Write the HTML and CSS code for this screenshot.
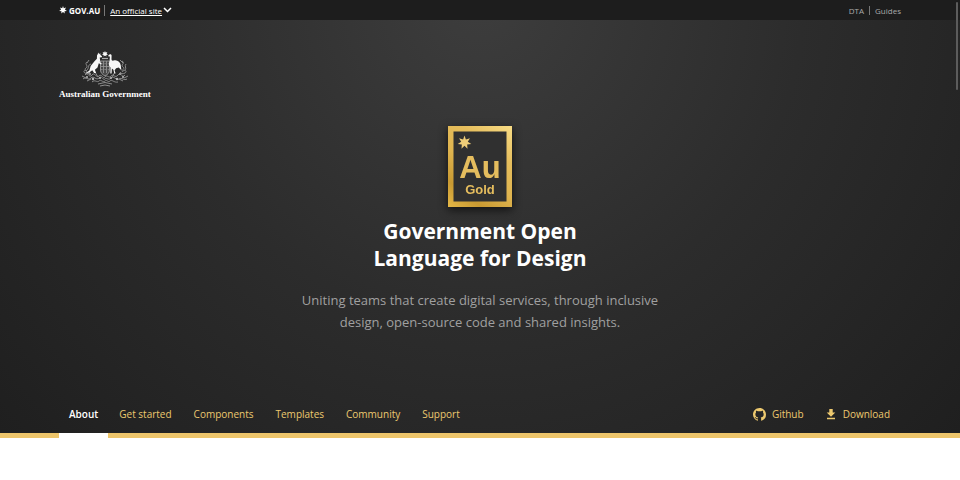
FILE: index.html
```html
<!DOCTYPE html>
<html lang="en-AU">
<head>
<meta charset="utf-8">
<meta name="viewport" content="width=device-width, initial-scale=1">
<title>Government Open Language for Design</title>
<link rel="stylesheet" href="styles.css">
</head>
<body>
<div class="masthead">
  <div class="topbar">
    <div class="topbar-left">
      <a class="gov" href="#"><svg class="star" viewBox="-10 -10 20 20" aria-hidden="true"><path d="M0-10 2-4.200 7.800-6.200 4.700-1 9.700 2.200 3.800 3 4.300 9 0 4.800-4.300 9-3.800 3-9.700 2.200-4.700-1-7.800-6.200-2-4.200Z"/></svg>GOV.AU</a>
      <button class="official" type="button"><span>An official site</span><svg viewBox="0 0 9 6" aria-hidden="true"><path d="M1 1l3.500 3.500L8 1"/></svg></button>
    </div>
    <div class="topbar-right"><a href="#">DTA</a><a href="#">Guides</a></div>
  </div>
  <header class="hero">
    <a class="crest" href="#">
      <svg viewBox="0 0 50 37" aria-hidden="true">
        <g stroke="#8c8c8c" stroke-width="1" fill="none">
          <path d="M5 24c3-4 4 4 7 0s4 4 7 1 4 4 6 1 4 2 6-1 4 3 7-1 4 4 7 0M3 28c3-3 5 2 8-1s5 3 8 0 4 3 6 1 3 2 6-1 5 3 8 1 5 2 8 0"/>
          <path d="M7 20c-3-2-4 1-2 2s4 1 5-1M43 20c3-2 4 1 2 2s-4 1-5-1M2 25l4 2M48 25l-4 2M15 21l3 5M35 21l-3 5"/>
          <path d="M7 11c-3 2 2 4-1 6s3 3 0 5M11 13c-4 1-1 4-5 7M42 10c4 2-2 4 1 6s-3 3 0 5M46 13c-2 2 1 4-1 6M40 9l3 3M9 9l-2 3"/>
          <path d="M12 31c3-3 5 1 7-1s4 2 6 0 3 2 5 0 4 2 8 1M18 33q7-3 14 0M20 35q5-2 10 0M7 30l4-2M43 30l-4-2"/>
        </g>
        <path d="M20.500 10h9v9c0 3-2 4.500-4.500 6-2.500-1.500-4.500-3-4.500-6z" fill="#4a4a4a" stroke="#aaa" stroke-width=".8"/>
        <path d="M21 15.500h8M23.500 10v12M26.500 10v12M21.200 12.700h1.300m2 0h1.300m2 0h1M21.200 18.500h1.300m2 0h1.300m2 0h1" stroke="#999" stroke-width=".8" fill="none"/>
        <path d="M22 7.500h6" stroke="#aaa" stroke-width="1.200"/>
        <g fill="#f8f8f8">
          <path d="M25 0l.7 1.600 1.700-.5-.8 1.500 1.400.9-1.700.4.1 1.700L25 4.400l-1.400 1.200.1-1.700-1.700-.4 1.400-.9-.8-1.500 1.700.5z"/>
          <path d="M18.200 1.500l1 1.700 1-1.200.2 2 1.700 1.300-.4.900-2 .3.500 3.500-.5 1 1.900 1.500-.5.900-2.300-1.200-1.300 4.300-2.600 2.200 1.200 3.300h-2l-1.800-2.800-3.100 2.400-3.700.9 3.900-3.100 1.300-4.500 3.600-4.500 2.600-2.700.1-3.200.7-1.200z"/>
          <path d="M28 5l1-1.300c.9-.9 2.500-.6 2.600.9l-.1 3.400c0 1.500.8 1.900 2.300 1.500 3.700-.8 6.400 1.500 7 4.900l.6 4.800-2.700-2.700-2.600.8-1.500 2 .9 3.300h-1.200l-.9-3.800-1.500-1.300-.3 5.100h-1.300l.2-6c-1.700-1.500-2-3.900-1-6.100l.4-5-1 .1z"/>
        </g>
        <g fill="#b8b8b8"><circle cx="7" cy="26" r="1"/><circle cx="13" cy="28" r="1.200"/><circle cx="20" cy="27" r="1"/><circle cx="31" cy="27" r="1"/><circle cx="37" cy="28" r="1.200"/><circle cx="43" cy="26" r="1"/><circle cx="10" cy="23" r=".9"/><circle cx="40" cy="23" r=".9"/></g>
      </svg>
      <span>Australian Government</span>
    </a>
    <div class="intro">
      <svg class="logo" viewBox="0 0 64 81" role="img" aria-label="Au Gold">
        <defs><linearGradient id="gold" gradientUnits="userSpaceOnUse" x1="64" y1="0" x2="0" y2="81"><stop offset="0" stop-color="#f8dc86"/><stop offset=".3" stop-color="#e5bd5c"/><stop offset=".55" stop-color="#dfb44f"/><stop offset=".8" stop-color="#c99a32"/><stop offset="1" stop-color="#e5b847"/></linearGradient></defs>
        <path d="M0 0h64v81H0z" fill="url(#gold)"/>
        <path d="M5.500 5.500h53v70h-53z" fill="#303030"/>
        <path transform="translate(16.500 16.500) scale(.7)" fill="#efcd78" d="M0-10 2-4.200 7.800-6.200 4.700-1 9.700 2.200 3.800 3 4.300 9 0 4.800-4.300 9-3.800 3-9.700 2.200-4.700-1-7.800-6.200-2-4.200Z"/>
        <text class="logo-symbol" x="32" y="52" text-anchor="middle">Au</text>
        <text class="logo-name" x="32" y="68" text-anchor="middle">Gold</text>
      </svg>
      <h1>Government Open<br>Language for Design</h1>
      <p>Uniting teams that create digital services, through inclusive design, open-source code and shared insights.</p>
    </div>
    <nav class="nav" aria-label="Main">
      <div class="links">
        <a class="current" href="#" aria-current="page">About</a>
        <a href="#">Get started</a>
        <a href="#">Components</a>
        <a href="#">Templates</a>
        <a href="#">Community</a>
        <a href="#">Support</a>
      </div>
      <div class="links">
        <a href="#"><svg viewBox="0 0 16 16" aria-hidden="true"><path d="M8 0C3.580 0 0 3.580 0 8c0 3.540 2.290 6.530 5.470 7.590.4.070.55-.17.55-.38 0-.19-.01-.82-.01-1.490-2.010.37-2.530-.49-2.690-.94-.09-.23-.48-.94-.82-1.130-.28-.15-.68-.52-.01-.53.63-.01 1.080.58 1.230.82.72 1.210 1.870.87 2.330.66.07-.52.28-.87.51-1.070-1.780-.2-3.640-.89-3.640-3.950 0-.87.31-1.590.82-2.150-.08-.2-.36-1.020.08-2.120 0 0 .67-.21 2.200.82.64-.18 1.320-.27 2-.27s1.360.09 2 .27c1.530-1.040 2.200-.82 2.200-.82.44 1.100.16 1.920.08 2.120.51.56.82 1.270.82 2.150 0 3.070-1.870 3.750-3.650 3.950.29.25.54.73.54 1.480 0 1.070-.01 1.930-.01 2.200 0 .21.15.46.55.38A8.010 8.010 0 0 0 16 8c0-4.420-3.580-8-8-8z"/></svg>Github</a>
        <a class="download" href="#"><svg viewBox="0 0 10 12" aria-hidden="true"><path d="M3.300 1h3.400v3.500H9.300L5 8.800.7 4.500h2.600zM1 9.700h8v1.600H1z"/></svg>Download</a>
      </div>
    </nav>
  </header>
  <div class="scrollbar" aria-hidden="true"></div>
</div>
</body>
</html>
```
FILE: styles.css
```css
* { box-sizing: border-box; }
body {
  margin: 0;
  background: #fff;
  font-family: "Open Sans", "Noto Sans", sans-serif;
  font-size: 10px;
}
a { color: inherit; text-decoration: none; }

.masthead {
  position: relative;
  border-bottom: 5px solid #edc56b;
  background: radial-gradient(circle at 50% 0, #3d3d3d, #2c2c2c 50%, #1f1f1f 100%);
  box-shadow: 0 1px 2px #999;
}
.topbar {
  display: flex;
  justify-content: space-between;
  align-items: center;
  height: 20px;
  padding: 0 59px;
  background: #1d1d1d;
  font-size: 8px;
}
.topbar-left, .topbar-right { display: flex; align-items: center; }
.gov {
  display: flex;
  align-items: center;
  gap: 2px;
  padding-right: 4px;
  border-right: 1px solid #777;
  color: #fff;
  font-weight: 700;
}
.star { width: 8px; height: 8px; fill: #fff; }
.official {
  display: flex;
  align-items: center;
  gap: 1px;
  padding: 0 0 0 5px;
  border: 0;
  background: none;
  color: #fff;
  font: inherit;
}
.official span { text-decoration: underline; }
.official svg { width: 9px; height: 6px; fill: none; stroke: #fff; stroke-width: 1.5; }
.topbar-right { color: #aaa; line-height: 9px; }
.topbar-right a + a { margin-left: 5px; padding-left: 5px; border-left: 1px solid #777; }

.hero { padding: 31px 59px 0; }
.crest {
  display: inline-flex;
  flex-direction: column;
  align-items: center;
  color: #fff;
  font: 700 9px/12px "Liberation Serif", serif;
}
.crest svg { width: 50px; height: 37px; }

.intro { text-align: center; margin-top: 26px; }
.logo { display: block; width: 64px; height: 81px; margin: 0 auto; filter: drop-shadow(0 3px 5px #111); }
.logo text { fill: #e5bd5e; font-family: "Liberation Sans", sans-serif; font-weight: 700; }
.logo .logo-symbol { font-size: 31px; }
.logo .logo-name { font-size: 13px; }
h1 { margin: 11px 0 0; color: #fff; font-size: 21px; line-height: 27px; font-weight: 700; }
.intro p { max-width: 370px; margin: 17px auto 0; color: #a0a0a0; font-size: 13px; line-height: 22px; }

.nav { display: flex; justify-content: space-between; margin-top: 62px; }
.links { display: flex; color: #edc96f; }
.links a {
  display: flex;
  align-items: center;
  height: 43px;
  margin-bottom: -5px;
  padding: 0 11px;
  border-bottom: 5px solid transparent;
}
.links .current { padding: 0 10px; border-color: #fff; color: #fff; font-weight: 600; }
.links svg { width: 13px; height: 13px; margin-right: 6px; fill: #edc96f; }
.links .download svg { width: 10px; height: 12px; margin-right: 7px; }

.scrollbar {
  position: absolute;
  top: 2px;
  right: 2px;
  width: 2px;
  height: 88px;
  border-radius: 1px;
  background: #5c5c5c;
}
```
